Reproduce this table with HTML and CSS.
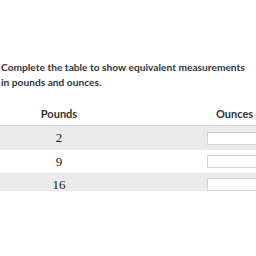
FILE: index.html
```html
<!DOCTYPE html>
<html>
<head>
	<meta charset="utf-8">
	<title>Pounds and Ounces</title>
	<link rel="stylesheet" href="styles.css">
</head>
<body>
	<main class="exercise">
		<p class="prompt">Complete the table to show equivalent measurements in pounds and ounces.</p>
		<table class="convert">
			<thead>
				<tr>
					<th class="col-pounds">Pounds</th>
					<th class="col-ounces">Ounces</th>
				</tr>
			</thead>
			<tbody>
				<tr>
					<td class="num">2</td>
					<td class="answer"><input type="text"></td>
				</tr>
				<tr>
					<td class="num">9</td>
					<td class="answer"><input type="text"></td>
				</tr>
				<tr>
					<td class="num">16</td>
					<td class="answer"><input type="text"></td>
				</tr>
			</tbody>
		</table>
	</main>
</body>
</html>
```

FILE: styles.css
```css
html, body {
	margin: 0;
	padding: 0;
	background: #fff;
	overflow: hidden;
}

/* panel is cut off part way through the last row */
.exercise {
	width: 340px;
	height: 131px;
	padding-top: 60px;
	padding-left: 1px;
	overflow: hidden;
	font-family: Lato, "Open Sans", sans-serif;
	color: #333;
}

.prompt {
	margin: 0 0 11px 0;
	width: 254px;
	font-size: 10.2px;
	font-weight: bold;
	line-height: 15px;
}

.convert {
	border-collapse: collapse;
	margin-left: -1px;
	width: 340px;
}

.convert th {
	height: 24px;
	padding: 0;
	font-size: 11px;
	font-weight: bold;
	color: #333;
	text-align: center;
	border-bottom: 1px solid #d6d6d6;
}

.col-pounds {
	width: 118px;
}

.col-ounces {
	text-align: left !important;
	padding-left: 98px !important;
}

.convert td {
	height: 23px;
	padding: 0;
}

.convert tbody tr:first-child td {
	height: 24px;
}

.convert tbody tr:nth-child(odd) {
	background-color: #ebebeb;
}

.num {
	text-align: center;
	font-family: "Liberation Serif", serif;
	font-size: 13px;
	line-height: 14px;
	color: #222;
}

.answer {
	padding-left: 89px !important;
}

.answer input {
	display: block;
	width: 100px;
	height: 11px;
	margin: 0;
	padding: 0;
	border: 1px solid #d4d4d4;
	background: #fff;
	box-sizing: content-box;
}
```
